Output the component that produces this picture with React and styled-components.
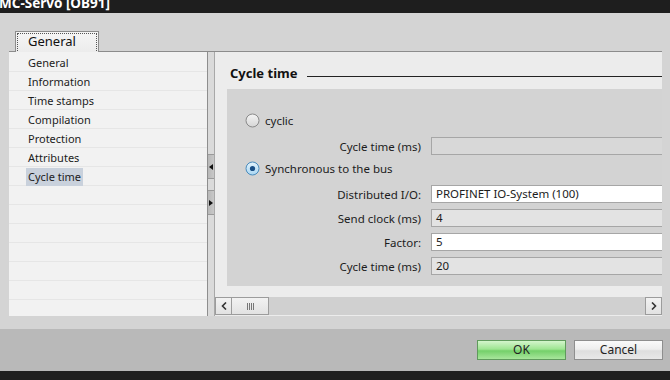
import React from "react";
import styled, { createGlobalStyle } from "styled-components";

const Global = createGlobalStyle`
  html, body { margin: 0; padding: 0; }
  body {
    background: #d4d4d4;
    font-family: "Noto Sans", "Open Sans", "DejaVu Sans", sans-serif;
    font-size: 11px;
    color: #1c1c1c;
  }
`;

const Window = styled.div`
  width: 670px;
  height: 380px;
  display: flex;
  flex-direction: column;
  overflow: hidden;
  background: #d4d4d4;
`;

const TitleBar = styled.div`
  height: 13px;
  flex: none;
  background: #1e1e1e;
  overflow: hidden;
  color: #fff;
  font-weight: bold;
  font-size: 13.5px;
  line-height: 13px;
  span { display: block; margin-top: -3px; margin-left: -1px; }
`;

const Body = styled.div`
  flex: none;
  padding: 16px 8px 0 9px;
  display: flex;
  flex-direction: column;
`;

const TabStrip = styled.div`
  height: 22px;
  display: flex;
  align-items: flex-end;
  padding-left: 6px;
  border-bottom: 1px solid #8c8c8c;
`;

const Tab = styled.div`
  height: 21px;
  width: 84px;
  box-sizing: border-box;
  border: 1px solid #8c8c8c;
  border-bottom: none;
  background: linear-gradient(#f6f6f6, #ececec);
  padding: 1px 1px 0 1px;
  margin-bottom: -1px;
  span {
    display: block;
    height: 18px;
    box-sizing: border-box;
    border: 1px dotted #555;
    border-bottom: none;
    font-size: 13px;
    line-height: 15px;
    padding-left: 10px;
    color: #111;
  }
`;

const Content = styled.div`
  display: flex;
  height: 264px;
`;

const Nav = styled.div`
  width: 198px;
  flex: none;
  padding-top: 1px;
  box-sizing: border-box;
  background-color: #f2f2f2;
  background-image: repeating-linear-gradient(
    to bottom,
    transparent 0px,
    transparent 18px,
    #e6e6e6 18px,
    #e6e6e6 19px
  );
  background-position: 0 1px;
`;

const NavItem = styled.div`
  height: 19px;
  display: flex;
  align-items: center;
  padding-left: 17px;
  span {
    padding: 0 2px;
    height: 18px;
    line-height: 18px;
    background: ${(p) => (p.$active ? "#c9d1dc" : "transparent")};
  }
`;

const Splitter = styled.div`
  width: 6px;
  flex: none;
  border-left: 1px solid #8e8e8e;
  border-right: 1px solid #a8a8a8;
  background: #dadada;
  display: flex;
  flex-direction: column;
  padding-top: 102px;
  gap: 11px;
`;

const SplitBtn = styled.div`
  height: 23px;
  background: linear-gradient(to right, #b8b8b8, #c8c8c8);
  border-top: 1px solid #9a9a9a;
  border-bottom: 1px solid #9a9a9a;
  display: flex;
  align-items: center;
  justify-content: center;
  svg { display: block; }
`;

const Main = styled.div`
  flex: 1;
  background: #ececec;
  display: flex;
  flex-direction: column;
  min-width: 0;
`;

const Heading = styled.div`
  display: flex;
  align-items: center;
  height: 18px;
  margin-top: 12px;
  padding-left: 15px;
  h2 {
    margin: 0;
    font-size: 13px;
    font-weight: bold;
    color: #111;
    white-space: nowrap;
  }
  i {
    flex: 1;
    height: 1px;
    margin-left: 10px;
    margin-top: 6px;
    background: #222;
  }
`;

const Box = styled.div`
  margin: 7px 0 0 12px;
  background: #d3d3d3;
  padding: 23px 0 11px 18px;
  display: flex;
  flex-direction: column;
`;

const RadioRow = styled.div`
  display: flex;
  align-items: center;
  gap: 5px;
  height: 17px;
  margin-top: ${(p) => p.$top || 0}px;
  font-size: 11.5px;
  svg { display: block; }
`;

const Field = styled.div`
  display: flex;
  align-items: center;
  height: 18px;
  margin-top: ${(p) => p.$top || 0}px;
  label {
    width: 176px;
    text-align: right;
    padding-right: 10px;
    flex: none;
    font-size: 11.5px;
  }
`;

const Input = styled.div`
  flex: 1;
  height: 18px;
  box-sizing: border-box;
  border: 1px solid #a6a6a6;
  border-right: none;
  background: ${(p) =>
    p.$kind === "edit" ? "#ffffff" : p.$kind === "off" ? "#d8d8d8" : "#e3e3e3"};
  padding-left: 4px;
  line-height: 16px;
  font-size: 11.5px;
  color: #1c1c1c;
  white-space: nowrap;
`;

const HScroll = styled.div`
  margin-top: 11px;
  height: 18px;
  background: #d0d0d0;
  display: flex;
  align-items: stretch;
`;

const ScrollBtn = styled.div`
  width: 17px;
  box-sizing: border-box;
  border: 1px solid #9c9c9c;
  background: linear-gradient(#f2f2f2, #e2e2e2);
  display: flex;
  align-items: center;
  justify-content: center;
  margin-left: ${(p) => (p.$end ? "auto" : "0")};
  svg { display: block; }
`;

const Thumb = styled.div`
  width: 37px;
  box-sizing: border-box;
  border: 1px solid #9c9c9c;
  border-left: none;
  background: linear-gradient(#f2f2f2, #e2e2e2);
  display: flex;
  align-items: center;
  justify-content: center;
  gap: 1px;
  i { width: 1px; height: 7px; background: #777; }
`;

const Footer = styled.div`
  margin-top: 13px;
  height: 42px;
  flex: none;
  background: #b9b9b9;
  display: flex;
  justify-content: flex-end;
  align-items: flex-start;
  gap: 8px;
  padding: 11px 7px 0 0;
  box-sizing: border-box;
`;

const Button = styled.div`
  width: 89px;
  height: 20px;
  box-sizing: border-box;
  border: 1px solid ${(p) => (p.$primary ? "#5f9a5c" : "#8e8e8e")};
  background: ${(p) =>
    p.$primary
      ? "linear-gradient(#d4f5cc 0%, #9ee592 45%, #74d06a 55%, #a8e69c 100%)"
      : "linear-gradient(#fafafa 0%, #eeeeee 45%, #dedede 55%, #e8e8e8 100%)"};
  text-align: center;
  line-height: 18px;
  font-size: 12px;
  color: #222;
`;

const BottomBar = styled.div`
  flex: 1;
  background: #202020;
`;

function Radio({ checked }) {
  const id = checked ? "rg1" : "rg0";
  return (
    <svg width="15" height="15" viewBox="0 0 15 15">
      <defs>
        <linearGradient id={id} x1="0" y1="0" x2="0" y2="1">
          <stop offset="0" stopColor={checked ? "#e4f3fc" : "#f4f4f4"} />
          <stop offset="1" stopColor={checked ? "#a9d6f2" : "#d6d6d6"} />
        </linearGradient>
      </defs>
      <circle
        cx="7.5"
        cy="7.5"
        r="6.5"
        fill={`url(#${id})`}
        stroke={checked ? "#4a8cbd" : "#8a8a8a"}
      />
      {checked && <circle cx="7.5" cy="7.5" r="2.6" fill="#1a4f86" />}
    </svg>
  );
}

const navItems = [
  "General",
  "Information",
  "Time stamps",
  "Compilation",
  "Protection",
  "Attributes",
  "Cycle time",
];

export default function App() {
  return (
    <>
      <Global />
      <Window>
        <TitleBar>
          <span>MC-Servo [OB91]</span>
        </TitleBar>
        <Body>
          <TabStrip>
            <Tab>
              <span>General</span>
            </Tab>
          </TabStrip>
          <Content>
            <Nav>
              {navItems.map((n) => (
                <NavItem key={n} $active={n === "Cycle time"}>
                  <span>{n}</span>
                </NavItem>
              ))}
            </Nav>
            <Splitter>
              <SplitBtn>
                <svg width="4" height="6" viewBox="0 0 4 6">
                  <path d="M4 0 L0 3 L4 6 Z" fill="#111" />
                </svg>
              </SplitBtn>
              <SplitBtn>
                <svg width="4" height="6" viewBox="0 0 4 6">
                  <path d="M0 0 L4 3 L0 6 Z" fill="#111" />
                </svg>
              </SplitBtn>
            </Splitter>
            <Main>
              <Heading>
                <h2>Cycle time</h2>
                <i />
              </Heading>
              <Box>
                <RadioRow>
                  <Radio />
                  <span>cyclic</span>
                </RadioRow>
                <Field $top={8}>
                  <label>Cycle time (ms)</label>
                  <Input $kind="off" />
                </Field>
                <RadioRow $top={5}>
                  <Radio checked />
                  <span>Synchronous to the bus</span>
                </RadioRow>
                <Field $top={8}>
                  <label>Distributed I/O:</label>
                  <Input $kind="edit">PROFINET IO-System (100)</Input>
                </Field>
                <Field $top={6}>
                  <label>Send clock (ms)</label>
                  <Input>4</Input>
                </Field>
                <Field $top={6}>
                  <label>Factor:</label>
                  <Input $kind="edit">5</Input>
                </Field>
                <Field $top={6}>
                  <label>Cycle time (ms)</label>
                  <Input>20</Input>
                </Field>
              </Box>
              <HScroll>
                <ScrollBtn>
                  <svg width="6" height="8" viewBox="0 0 6 8">
                    <path d="M5 0.5 L1.5 4 L5 7.5" fill="none" stroke="#333" strokeWidth="1.6" />
                  </svg>
                </ScrollBtn>
                <Thumb>
                  <i />
                  <i />
                  <i />
                  <i />
                </Thumb>
                <ScrollBtn $end>
                  <svg width="6" height="8" viewBox="0 0 6 8">
                    <path d="M1 0.5 L4.5 4 L1 7.5" fill="none" stroke="#333" strokeWidth="1.6" />
                  </svg>
                </ScrollBtn>
              </HScroll>
            </Main>
          </Content>
        </Body>
        <Footer>
          <Button $primary>OK</Button>
          <Button>Cancel</Button>
        </Footer>
        <BottomBar />
      </Window>
    </>
  );
}
